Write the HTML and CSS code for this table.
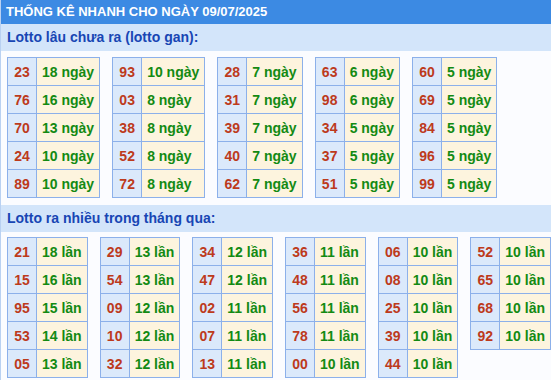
FILE: index.html
```html
<!DOCTYPE html>
<html lang="vi">
<head>
<meta charset="utf-8">
<title>Thống kê nhanh</title>
<link rel="stylesheet" href="styles.css">
</head>
<body>
<div class="page">
  <div class="title">THỐNG KÊ NHANH CHO NGÀY 09/07/2025</div>
  <div class="section-head">Lotto lâu chưa ra (lotto gan):</div>
  <div class="tables">
    <table class="tb"><tr><td class="n">23</td><td class="v">18 ngày</td></tr><tr><td class="n">76</td><td class="v">16 ngày</td></tr><tr><td class="n">70</td><td class="v">13 ngày</td></tr><tr><td class="n">24</td><td class="v">10 ngày</td></tr><tr><td class="n">89</td><td class="v">10 ngày</td></tr></table>
    <table class="tb"><tr><td class="n">93</td><td class="v">10 ngày</td></tr><tr><td class="n">03</td><td class="v">8 ngày</td></tr><tr><td class="n">38</td><td class="v">8 ngày</td></tr><tr><td class="n">52</td><td class="v">8 ngày</td></tr><tr><td class="n">72</td><td class="v">8 ngày</td></tr></table>
    <table class="tb"><tr><td class="n">28</td><td class="v">7 ngày</td></tr><tr><td class="n">31</td><td class="v">7 ngày</td></tr><tr><td class="n">39</td><td class="v">7 ngày</td></tr><tr><td class="n">40</td><td class="v">7 ngày</td></tr><tr><td class="n">62</td><td class="v">7 ngày</td></tr></table>
    <table class="tb"><tr><td class="n">63</td><td class="v">6 ngày</td></tr><tr><td class="n">98</td><td class="v">6 ngày</td></tr><tr><td class="n">34</td><td class="v">5 ngày</td></tr><tr><td class="n">37</td><td class="v">5 ngày</td></tr><tr><td class="n">51</td><td class="v">5 ngày</td></tr></table>
    <table class="tb"><tr><td class="n">60</td><td class="v">5 ngày</td></tr><tr><td class="n">69</td><td class="v">5 ngày</td></tr><tr><td class="n">84</td><td class="v">5 ngày</td></tr><tr><td class="n">96</td><td class="v">5 ngày</td></tr><tr><td class="n">99</td><td class="v">5 ngày</td></tr></table>
  </div>
  <div class="section-head">Lotto ra nhiều trong tháng qua:</div>
  <div class="tables second">
    <table class="tb"><tr><td class="n">21</td><td class="v">18 lần</td></tr><tr><td class="n">15</td><td class="v">16 lần</td></tr><tr><td class="n">95</td><td class="v">15 lần</td></tr><tr><td class="n">53</td><td class="v">14 lần</td></tr><tr><td class="n">05</td><td class="v">13 lần</td></tr></table>
    <table class="tb"><tr><td class="n">29</td><td class="v">13 lần</td></tr><tr><td class="n">54</td><td class="v">13 lần</td></tr><tr><td class="n">09</td><td class="v">12 lần</td></tr><tr><td class="n">10</td><td class="v">12 lần</td></tr><tr><td class="n">32</td><td class="v">12 lần</td></tr></table>
    <table class="tb"><tr><td class="n">34</td><td class="v">12 lần</td></tr><tr><td class="n">47</td><td class="v">12 lần</td></tr><tr><td class="n">02</td><td class="v">11 lần</td></tr><tr><td class="n">07</td><td class="v">11 lần</td></tr><tr><td class="n">13</td><td class="v">11 lần</td></tr></table>
    <table class="tb"><tr><td class="n">36</td><td class="v">11 lần</td></tr><tr><td class="n">48</td><td class="v">11 lần</td></tr><tr><td class="n">56</td><td class="v">11 lần</td></tr><tr><td class="n">78</td><td class="v">11 lần</td></tr><tr><td class="n">00</td><td class="v">10 lần</td></tr></table>
    <table class="tb"><tr><td class="n">06</td><td class="v">10 lần</td></tr><tr><td class="n">08</td><td class="v">10 lần</td></tr><tr><td class="n">25</td><td class="v">10 lần</td></tr><tr><td class="n">39</td><td class="v">10 lần</td></tr><tr><td class="n">44</td><td class="v">10 lần</td></tr></table>
    <table class="tb"><tr><td class="n">52</td><td class="v">10 lần</td></tr><tr><td class="n">65</td><td class="v">10 lần</td></tr><tr><td class="n">68</td><td class="v">10 lần</td></tr><tr><td class="n">92</td><td class="v">10 lần</td></tr></table>
  </div>
</div>
</body>
</html>
```

FILE: styles.css
```css
* { box-sizing: border-box; }
html, body { margin: 0; padding: 0; background: #fff; }
body {
  font-family: "Liberation Sans", Arial, sans-serif;
  font-weight: bold;
  width: 551px;
  height: 380px;
  overflow: hidden;
}
.page {
  border-left: 1px solid #b9d1f2;
  min-height: 380px;
  background: #fbfcff;
}
.title {
  height: 24px;
  line-height: 24px;
  background: #3c8ae3;
  color: #fff;
  font-size: 13px;
  padding-left: 5px;
}
.section-head {
  height: 27px;
  line-height: 27px;
  background: #d3e5fa;
  color: #1846b4;
  font-size: 14px;
  padding-left: 6px;
}
.tables {
  display: flex;
  align-items: flex-start;
  gap: 12px;
  padding: 6px 0 7px 6px;
}
.tables.second { padding-top: 5px; }
.tb {
  border-collapse: collapse;
  font-size: 14px;
}
.tb td {
  border: 1px solid #8cb0ea;
  height: 28px;
  padding: 0 5px;
  white-space: nowrap;
}
.tb td.n {
  width: 29px;
  background: #dbe9fb;
  color: #bd3a1c;
  text-align: center;
}
.tb td.v {
  background: #fdf4de;
  color: #138a13;
}
```
